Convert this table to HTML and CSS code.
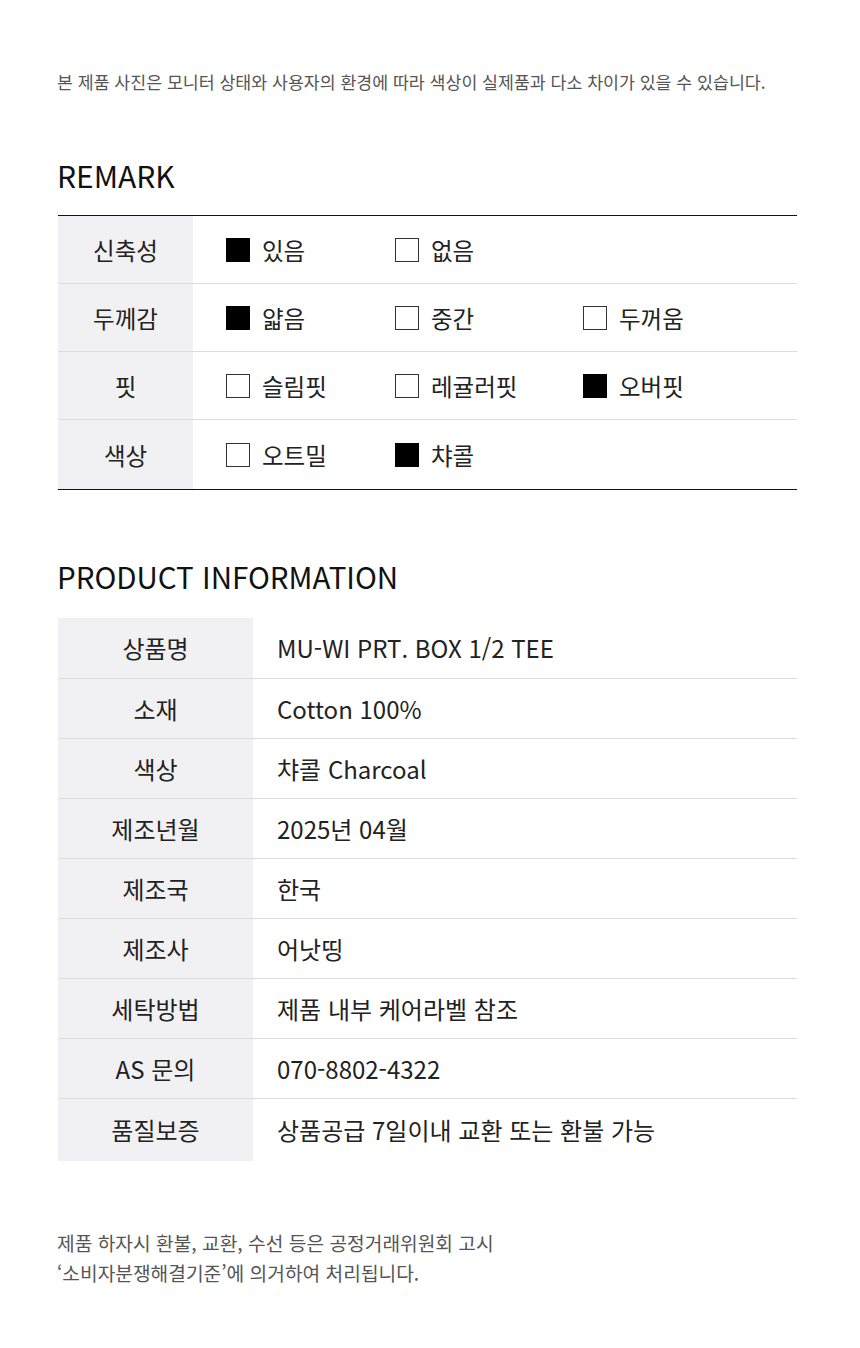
FILE: index.html
```html
<!DOCTYPE html>
<html lang="ko">

<head>
    <meta charset="UTF-8">
    <meta name="viewport" content="width=device-width, initial-scale=1.0">
    <title>상품 상세정보</title>
    <link rel="stylesheet" href="styles.css">
</head>

<body>
    <div id="wrap">
        <p class="notice">본 제품 사진은 모니터 상태와 사용자의 환경에 따라 색상이 실제품과 다소 차이가 있을 수 있습니다.</p>

        <h2 class="tit">REMARK</h2>
        <div class="remark">
            <div class="row">
                <div class="label">신축성</div>
                <div class="opts">
                    <span class="opt on"><i></i>있음</span>
                    <span class="opt"><i></i>없음</span>
                </div>
            </div>
            <div class="row">
                <div class="label">두께감</div>
                <div class="opts">
                    <span class="opt on"><i></i>얇음</span>
                    <span class="opt"><i></i>중간</span>
                    <span class="opt"><i></i>두꺼움</span>
                </div>
            </div>
            <div class="row">
                <div class="label">핏</div>
                <div class="opts">
                    <span class="opt"><i></i>슬림핏</span>
                    <span class="opt"><i></i>레귤러핏</span>
                    <span class="opt on"><i></i>오버핏</span>
                </div>
            </div>
            <div class="row">
                <div class="label">색상</div>
                <div class="opts">
                    <span class="opt"><i></i>오트밀</span>
                    <span class="opt on"><i></i>챠콜</span>
                </div>
            </div>
        </div>

        <h2 class="tit tit2">PRODUCT INFORMATION</h2>
        <table class="info">
            <tr><th>상품명</th><td>MU-WI PRT. BOX 1/2 TEE</td></tr>
            <tr><th>소재</th><td>Cotton 100%</td></tr>
            <tr><th>색상</th><td>챠콜 Charcoal</td></tr>
            <tr><th>제조년월</th><td>2025년 04월</td></tr>
            <tr><th>제조국</th><td>한국</td></tr>
            <tr><th>제조사</th><td>어낫띵</td></tr>
            <tr><th>세탁방법</th><td>제품 내부 케어라벨 참조</td></tr>
            <tr><th>AS 문의</th><td>070-8802-4322</td></tr>
            <tr><th>품질보증</th><td>상품공급 7일이내 교환 또는 환불 가능</td></tr>
        </table>

        <p class="foot">제품 하자시 환불, 교환, 수선 등은 공정거래위원회 고시<br>‘소비자분쟁해결기준’에 의거하여 처리됩니다.</p>
    </div>
</body>

</html>
```

FILE: styles.css
```css
* {
    margin: 0;
    padding: 0;
    box-sizing: border-box;
}

body {
    font-family: "Noto Sans CJK KR", "Noto Sans", sans-serif;
    color: #111;
    background: #fff;
}

#wrap {
    width: 740px;
    margin: 0 0 0 57px;
    padding: 70px 0 60px;
}

.notice {
    font-size: 17.3px;
    line-height: 24px;
    color: #555;
}

.tit {
    margin-top: 63px;
    font-size: 30px;
    line-height: 36px;
    font-weight: 400;
    color: #111;
}

.tit2 {
    margin-top: 68px;
    font-size: 29.5px;
}

/* remark */
.remark {
    margin-top: 22px;
    border-top: 1px solid #111;
    border-bottom: 1px solid #111;
    margin-left: 1px;
}

.remark .row {
    display: flex;
    height: 68px;
    border-bottom: 1px solid #dcdcdc;
}

.remark .row:last-child {
    border-bottom: none;
    height: 69px;
}

.remark .label {
    width: 135px;
    background: #f1f1f3;
    display: flex;
    align-items: center;
    justify-content: center;
    font-size: 23.5px;
    color: #222;
}

.opts {
    flex: 1;
    display: grid;
    grid-template-columns: 169px 188px 1fr;
    align-items: center;
    padding-left: 33px;
}

.opt {
    display: flex;
    align-items: center;
    gap: 12px;
    font-size: 23.5px;
    color: #222;
}

.opt i {
    display: block;
    width: 24px;
    height: 24px;
    border: 1px solid #333;
    background: #fff;
}

.opt.on i {
    background: #000;
    border-color: #000;
}

/* info table */
.info {
    margin-top: 24px;
    margin-left: 1px;
    width: 739px;
    border-collapse: collapse;
}

.info th,
.info td {
    height: 60px;
    font-size: 24px;
    font-weight: 400;
    color: #222;
    border-bottom: 1px solid #dcdcdc;
}

.info tr:last-child th,
.info tr:last-child td {
    border-bottom: none;
    height: 63px;
}

.info th {
    width: 195px;
    background: #f1f1f3;
    text-align: center;
}

.info td {
    padding-left: 24px;
    text-align: left;
}

.foot {
    margin-top: 67px;
    font-size: 19.2px;
    line-height: 30px;
    color: #555;
}
```
